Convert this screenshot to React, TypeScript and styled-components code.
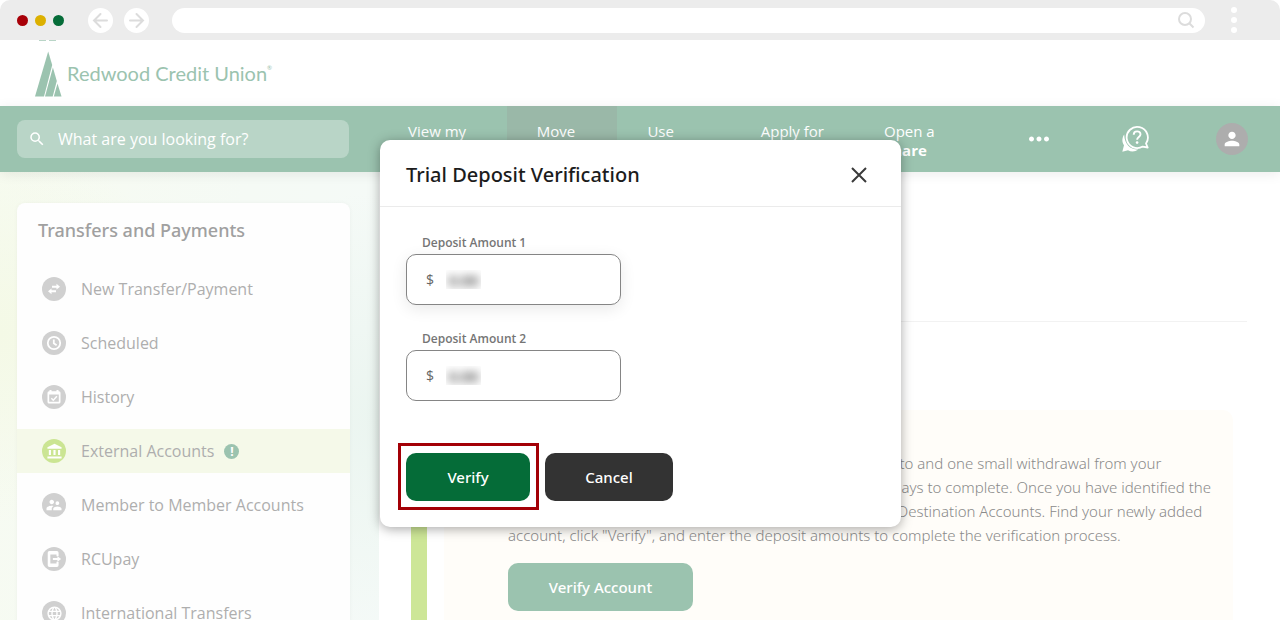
import React from "react";
import styled, { createGlobalStyle } from "styled-components";
import {
  MdSearch,
  MdPerson,
  MdAccountBalance,
  MdSupervisorAccount,
  MdLanguage,
  MdMoreHoriz,
} from "react-icons/md";

const Global = createGlobalStyle`
  * { box-sizing: border-box; }
  html, body { margin: 0; }
  body { font-family: "Open Sans", sans-serif; font-size: 16px; color: #aeaeae; background: #fff; }
  button, input { font-family: inherit; }
  button { cursor: pointer; border: 0; padding: 0; }
  a { color: inherit; text-decoration: none; }
`;

const noto = `"Noto Sans", sans-serif`;

const Frame = styled.div`
  position: relative;
  height: 100vh;
  display: flex;
  flex-direction: column;
  overflow: hidden;
`;

/* Browser bar */
const Chrome = styled.div`
  flex: none;
  height: 40px;
  display: flex;
  align-items: center;
  padding: 0 43px 0 17px;
  background: #ececec;
  border-radius: 10px 10px 0 0;
`;
const Lights = styled.div`
  display: flex;
  gap: 7px;
  margin-right: 24px;
`;
const Light = styled.span<{ $color: string }>`
  width: 11px;
  height: 11px;
  border-radius: 50%;
  background: ${(p) => p.$color};
`;
const RoundButton = styled.button`
  display: grid;
  place-items: center;
  width: 25px;
  height: 25px;
  margin-right: 11px;
  border-radius: 50%;
  background: #fff;
`;
const Address = styled.label`
  flex: 1;
  display: flex;
  align-items: center;
  height: 25px;
  margin: 0 26px 0 12px;
  padding: 0 10px;
  border-radius: 13px;
  background: #fff;
`;
const AddressInput = styled.input`
  flex: 1;
  border: 0;
  outline: 0;
  background: transparent;
`;
const Kebab = styled.button`
  display: flex;
  flex-direction: column;
  gap: 4px;
  background: transparent;
  span { width: 6px; height: 6px; border-radius: 50%; background: #fff; }
`;

/* Site header */
const Brand = styled.header`
  flex: none;
  height: 66px;
  padding-left: 34px;
`;
const BrandLink = styled.a`
  display: flex;
  height: 66px;
  color: #9bc3af;
  font: 400 20px/66px Lato, sans-serif;
  sup { font-size: 6px; line-height: 56px; vertical-align: top; }
`;
const NavBar = styled.div`
  flex: none;
  position: relative;
  display: flex;
  align-items: stretch;
  height: 66px;
  padding: 0 32px 0 17px;
  background: #9bc3af;
  color: #fff;
  box-shadow: 0 2px 12px rgba(0, 0, 0, 0.08);
`;
const Search = styled.label`
  align-self: center;
  display: flex;
  align-items: center;
  gap: 12px;
  width: 332px;
  height: 38px;
  margin-right: 29px;
  padding: 0 11px;
  border-radius: 8px;
  background: #b9d5c7;
`;
const SearchInput = styled.input`
  flex: 1;
  min-width: 0;
  padding: 0;
  border: 0;
  outline: 0;
  background: transparent;
  color: #fff;
  font-size: 16px;
  &::placeholder { color: #fff; opacity: 1; }
`;
const Tabs = styled.nav`
  display: flex;
`;
const Tab = styled.a<{ $active?: boolean }>`
  padding: 16px 30px 0;
  font-size: 15px;
  line-height: 19px;
  background: ${(p) => (p.$active ? "#9ab8a8" : "transparent")};
  strong { display: block; font-weight: 700; }
`;
const Tools = styled.div`
  flex: 1;
  display: flex;
  align-items: center;
  justify-content: flex-end;
`;
const ToolButton = styled.button<{ $gap: number }>`
  display: grid;
  place-items: center;
  margin-right: ${(p) => p.$gap}px;
  background: transparent;
  color: #fff;
`;
const Avatar = styled.button`
  display: grid;
  place-items: center;
  width: 32px;
  height: 32px;
  border-radius: 50%;
  background: #adadad;
  color: #fff;
`;

/* Page */
const Page = styled.div`
  flex: 1;
  min-height: 0;
  display: flex;
`;
const Side = styled.aside`
  flex: none;
  width: 379px;
  padding: 31px 29px 0 17px;
  background: radial-gradient(circle at 0 36%, #f4f9e6 0, rgba(244, 249, 230, 0) 40%),
    radial-gradient(circle at 100% 55%, #ebf5f0 0, rgba(235, 245, 240, 0) 50%),
    linear-gradient(100deg, #f7fbf1 0%, #f5faf5 55%, #f5faf8 100%);
`;
const SideCard = styled.nav`
  min-height: 480px;
  border-radius: 8px;
  background: #fefefe;
  box-shadow: 0 0 4px rgba(0, 0, 0, 0.04);
`;
const SideTitle = styled.h2`
  margin: 0;
  padding: 14px 21px 24px;
  font-family: ${noto};
  font-size: 18px;
  line-height: 26px;
  font-weight: 500;
  color: #a0a0a0;
`;
const SideItem = styled.a<{ $active?: boolean }>`
  display: flex;
  align-items: center;
  height: 44px;
  margin-bottom: 10px;
  padding-left: 25px;
  background: ${(p) => (p.$active ? "#f5f9e9" : "transparent")};
  svg { flex: none; }
`;
const Disc = styled.span<{ $active?: boolean }>`
  display: grid;
  place-items: center;
  width: 24px;
  height: 24px;
  margin-right: 15px;
  border-radius: 50%;
  background: ${(p) => (p.$active ? "#cbe593" : "#d0d0d0")};
  color: #fff;
`;
const Alert = styled.span`
  width: 15px;
  height: 15px;
  margin-left: 10px;
  border-radius: 50%;
  background: #9bc3af;
  color: #fff;
  font-size: 12px;
  line-height: 15px;
  font-weight: 700;
  text-align: center;
`;
const Main = styled.main`
  flex: 1;
  padding: 149px 33px 0 32px;
`;
const Rule = styled.hr`
  margin: 0 0 88px;
  border: 0;
  border-top: 1px solid #f2f2f2;
`;
const Notice = styled.section`
  display: flex;
  gap: 17px;
  margin-right: 14px;
`;
const Stripe = styled.div`
  width: 16px;
  background: #cde697;
`;
const NoticeBody = styled.div`
  flex: 1;
  min-height: 240px;
  padding: 41px 0 0 64px;
  border-radius: 0 10px 0 0;
  background: #fffdf9;
`;
const NoticeText = styled.p`
  margin: 0 0 16px;
  color: #8a8a8a;
  font-family: ${noto};
  font-size: 15px;
  line-height: 24px;
  font-weight: 300;
  white-space: nowrap;
`;
const Button = styled.button<{ $tone: string; $width: number }>`
  width: ${(p) => p.$width}px;
  height: 48px;
  border-radius: 10px;
  background: ${(p) => p.$tone};
  color: #fff;
  font-family: ${noto};
  font-size: 15px;
  font-weight: 500;
`;

/* Dialog */
const Overlay = styled.div`
  position: absolute;
  inset: 0;
  display: flex;
  justify-content: center;
  align-items: flex-start;
  padding: 140px 0 0 1px;
`;
const Dialog = styled.div`
  width: 521px;
  border-radius: 10px;
  background: #fff;
  box-shadow: 0 2px 12px rgba(0, 0, 0, 0.35);
`;
const DialogHead = styled.div`
  display: flex;
  align-items: center;
  justify-content: space-between;
  height: 67px;
  padding: 3px 32px 0 26px;
  border-bottom: 1px solid #ebebeb;
`;
const DialogTitle = styled.h1`
  margin: 0;
  font-family: ${noto};
  font-size: 20px;
  line-height: 28px;
  font-weight: 500;
  color: #1c1c1c;
`;
const Close = styled.button`
  display: grid;
  background: transparent;
`;
const DialogBody = styled.form`
  padding: 27px 26px 26px;
`;
const Field = styled.div`
  margin-bottom: 25px;
`;
const Label = styled.label`
  display: block;
  padding-left: 16px;
  margin-bottom: 2px;
  font-size: 12px;
  line-height: 18px;
  font-weight: 600;
  color: #757575;
`;
const AmountBox = styled.div<{ $raised?: boolean }>`
  display: flex;
  align-items: center;
  gap: 12px;
  width: 215px;
  height: 51px;
  padding-left: 19px;
  border: 1px solid #858585;
  border-radius: 10px;
  background: #fff;
  color: #666;
  font-size: 14px;
  box-shadow: ${(p) => (p.$raised ? "0 4px 16px rgba(0, 0, 0, 0.09)" : "none")};
`;
const Masked = styled.div`
  display: flex;
  width: 35px;
  height: 19px;
  overflow: hidden;
`;
const AmountInput = styled.input`
  width: 35px;
  padding: 0;
  border: 0;
  outline: 0;
  background: transparent;
  color: #555;
  font-size: 15px;
  line-height: 18px;
  font-weight: 700;
  text-align: center;
  filter: blur(5px);
`;
const Actions = styled.div`
  display: flex;
  gap: 15px;
  padding-top: 27px;
`;
const Highlight = styled.div`
  position: relative;
  &::after {
    content: "";
    position: absolute;
    inset: -10px -9px -9px -8px;
    border: 3px solid #a30006;
    pointer-events: none;
  }
`;

const Arrow = ({ flip }: { flip?: boolean }) => (
  <svg width="17" height="17" viewBox="0 0 17 17" fill="none" stroke="#dcdcdc" strokeWidth="2" strokeLinecap="round" aria-hidden>
    {flip ? <path d="M2 8.5h13M8.500 2l6.500 6.500-6.500 6.500" /> : <path d="M15 8.5H2M8.500 2 2 8.500l6.500 6.500" />}
  </svg>
);

const LogoMark = () => (
  <svg width="33" height="66" viewBox="0 0 33 66" fill="currentColor" aria-hidden>
    <path d="M5 0h7v1H5zM15 0h7v1h-7z" opacity="0.7" />
    <path d="M14.200 11.500 18.200 25 10 56.500H1z" />
    <path d="M18.900 27.500 22.800 41 18.700 56.500h-7.700z" />
    <path d="M23.500 43.500 27.500 56.500h-7.700z" />
  </svg>
);

const Swap = () => (
  <svg width="14" height="14" viewBox="0 0 14 14" fill="none" stroke="currentColor" strokeWidth="2" aria-hidden>
    <path d="M5 4.700h5M4 9.300h5" />
    <path d="M9.500 1.800 13 4.700 9.500 7.600zM4.500 6.400 1 9.300l3.500 2.900z" fill="currentColor" stroke="none" />
  </svg>
);

const Clock = () => (
  <svg width="16" height="16" viewBox="0 0 16 16" fill="none" stroke="currentColor" strokeWidth="1.800" aria-hidden>
    <circle cx="8" cy="8" r="6.200" />
    <path d="M7.800 4.500v3.800l2.800 2" />
  </svg>
);

const CalendarCheck = () => (
  <svg width="14" height="14" viewBox="0 0 14 14" aria-hidden>
    <path
      fill="currentColor"
      fillRule="evenodd"
      d="M2.500 0h2v1.200h5V0h2v1.200H12a1.500 1.500 0 0 1 1.500 1.500v9.300A1.500 1.500 0 0 1 12 13.500H2A1.500 1.500 0 0 1 .5 12V2.700A1.500 1.500 0 0 1 2 1.200h.5zM2.200 4.500v7.300h9.600V4.500z"
    />
    <path d="M4.300 8.200l2 2 3.600-3.900" fill="none" stroke="currentColor" strokeWidth="1.500" />
  </svg>
);

const PayDoc = () => (
  <svg width="16" height="16" viewBox="0 0 14 14" fill="currentColor" aria-hidden>
    <path
      fillRule="evenodd"
      d="M3 0h6.500A1.500 1.500 0 0 1 11 1.500v3H9.200V3H3.800v8h5.400V9.500H11v3A1.500 1.500 0 0 1 9.500 14H3a1.500 1.500 0 0 1-1.500-1.500v-11A1.500 1.500 0 0 1 3 0z"
    />
    <path d="M6 6.200h4V4.500L13.200 7 10 9.500V7.800H6z" />
  </svg>
);

const HelpChat = () => (
  <svg width="28" height="28" viewBox="0 0 28 28" aria-hidden>
    <path
      d="M3.200 9.500C.8 13 .9 17.200 3 20.300L1.300 26.800 7 25.300c3.300 1.800 7.200 1.500 10.300-.7C9.800 25 3.500 19.500 3.200 9.500z"
      fill="currentColor"
    />
    <path
      d="M25 18.500a10.600 10.600 0 1 0-3.300 3.100l5 .9z"
      fill="none"
      stroke="currentColor"
      strokeWidth="1.800"
      strokeLinejoin="round"
    />
    <path d="M12.700 9.700c0-4.400 6.800-4.300 6.800-.4 0 2.700-3.400 2.700-3.400 5.500" fill="none" stroke="currentColor" strokeWidth="1.900" />
    <circle cx="16.100" cy="17.600" r="1.300" fill="currentColor" />
  </svg>
);

const navItems = [
  { top: "View my", bottom: "Accounts" },
  { top: "Move", bottom: "Money", active: true },
  { top: "Use", bottom: "Budget" },
  { top: "Apply for", bottom: "Loans" },
  { top: "Open a", bottom: "Share" },
];

const sideItems = [
  { text: "New Transfer/Payment", icon: <Swap /> },
  { text: "Scheduled", icon: <Clock /> },
  { text: "History", icon: <CalendarCheck /> },
  { text: "External Accounts", icon: <MdAccountBalance size={17} />, active: true },
  { text: "Member to Member Accounts", icon: <MdSupervisorAccount size={18} /> },
  { text: "RCUpay", icon: <PayDoc /> },
  { text: "International Transfers", icon: <MdLanguage size={17} /> },
];

const AmountField = ({ id, label, raised }: { id: string; label: string; raised?: boolean }) => (
  <Field>
    <Label htmlFor={id}>{label}</Label>
    <AmountBox $raised={raised}>
      <span>$</span>
      <Masked>
        <AmountInput id={id} defaultValue="0.00" />
      </Masked>
    </AmountBox>
  </Field>
);

export default function App() {
  return (
    <Frame>
      <Global />
      <Chrome>
        <Lights>
          <Light $color="#a80008" />
          <Light $color="#dcb000" />
          <Light $color="#056c38" />
        </Lights>
        <RoundButton aria-label="Back">
          <Arrow />
        </RoundButton>
        <RoundButton aria-label="Forward">
          <Arrow flip />
        </RoundButton>
        <Address>
          <AddressInput aria-label="Address" />
          <svg width="18" height="18" viewBox="0 0 18 18" fill="none" stroke="#dcdcdc" strokeWidth="2" aria-hidden>
            <circle cx="8" cy="8" r="6" />
            <path d="M12.300 12.300 16.500 16.500" />
          </svg>
        </Address>
        <Kebab aria-label="Menu">
          <span />
          <span />
          <span />
        </Kebab>
      </Chrome>

      <Brand>
        <BrandLink href="#">
          <LogoMark />
          <span>
            Redwood Credit Union<sup>®</sup>
          </span>
        </BrandLink>
      </Brand>

      <NavBar>
        <Search>
          <MdSearch size={18} />
          <SearchInput aria-label="Search" placeholder="What are you looking for?" />
        </Search>
        <Tabs>
          {navItems.map((n) => (
            <Tab key={n.top} href="#" $active={n.active}>
              {n.top}
              <strong>{n.bottom}</strong>
            </Tab>
          ))}
        </Tabs>
        <Tools>
          <ToolButton $gap={67} aria-label="More">
            <MdMoreHoriz size={30} />
          </ToolButton>
          <ToolButton $gap={67} aria-label="Help">
            <HelpChat />
          </ToolButton>
          <Avatar aria-label="Profile">
            <MdPerson size={22} />
          </Avatar>
        </Tools>
      </NavBar>

      <Page>
        <Side>
          <SideCard>
            <SideTitle>Transfers and Payments</SideTitle>
            {sideItems.map((s) => (
              <SideItem key={s.text} href="#" $active={s.active}>
                <Disc $active={s.active}>{s.icon}</Disc>
                {s.text}
                {s.active && <Alert>!</Alert>}
              </SideItem>
            ))}
          </SideCard>
        </Side>
        <Main>
          <Rule />
          <Notice>
            <Stripe />
            <NoticeBody>
              <NoticeText>
                RCU will make two small deposits, each less than $1.00, into and one small withdrawal from your
                <br />
                external account. It could take as long as three business days to complete. Once you have identified the
                <br />
                deposit amounts, return to this page and then locate the Destination Accounts. Find your newly added
                <br />
                account, click "Verify", and enter the deposit amounts to complete the verification process.
              </NoticeText>
              <Button $tone="#9bc3af" $width={185}>
                Verify Account
              </Button>
            </NoticeBody>
          </Notice>
        </Main>
      </Page>

      <Overlay>
        <Dialog role="dialog" aria-labelledby="dialog-title">
          <DialogHead>
            <DialogTitle id="dialog-title">Trial Deposit Verification</DialogTitle>
            <Close aria-label="Close">
              <svg width="20" height="20" viewBox="0 0 20 20" stroke="#3a3a3a" strokeWidth="2" aria-hidden>
                <path d="M3 3l14 14M17 3 3 17" />
              </svg>
            </Close>
          </DialogHead>
          <DialogBody onSubmit={(e: React.FormEvent) => e.preventDefault()}>
            <AmountField id="amount-1" label="Deposit Amount 1" raised />
            <AmountField id="amount-2" label="Deposit Amount 2" />
            <Actions>
              <Highlight>
                <Button type="submit" $tone="#056c38" $width={124}>
                  Verify
                </Button>
              </Highlight>
              <Button type="button" $tone="#333333" $width={128}>
                Cancel
              </Button>
            </Actions>
          </DialogBody>
        </Dialog>
      </Overlay>
    </Frame>
  );
}
